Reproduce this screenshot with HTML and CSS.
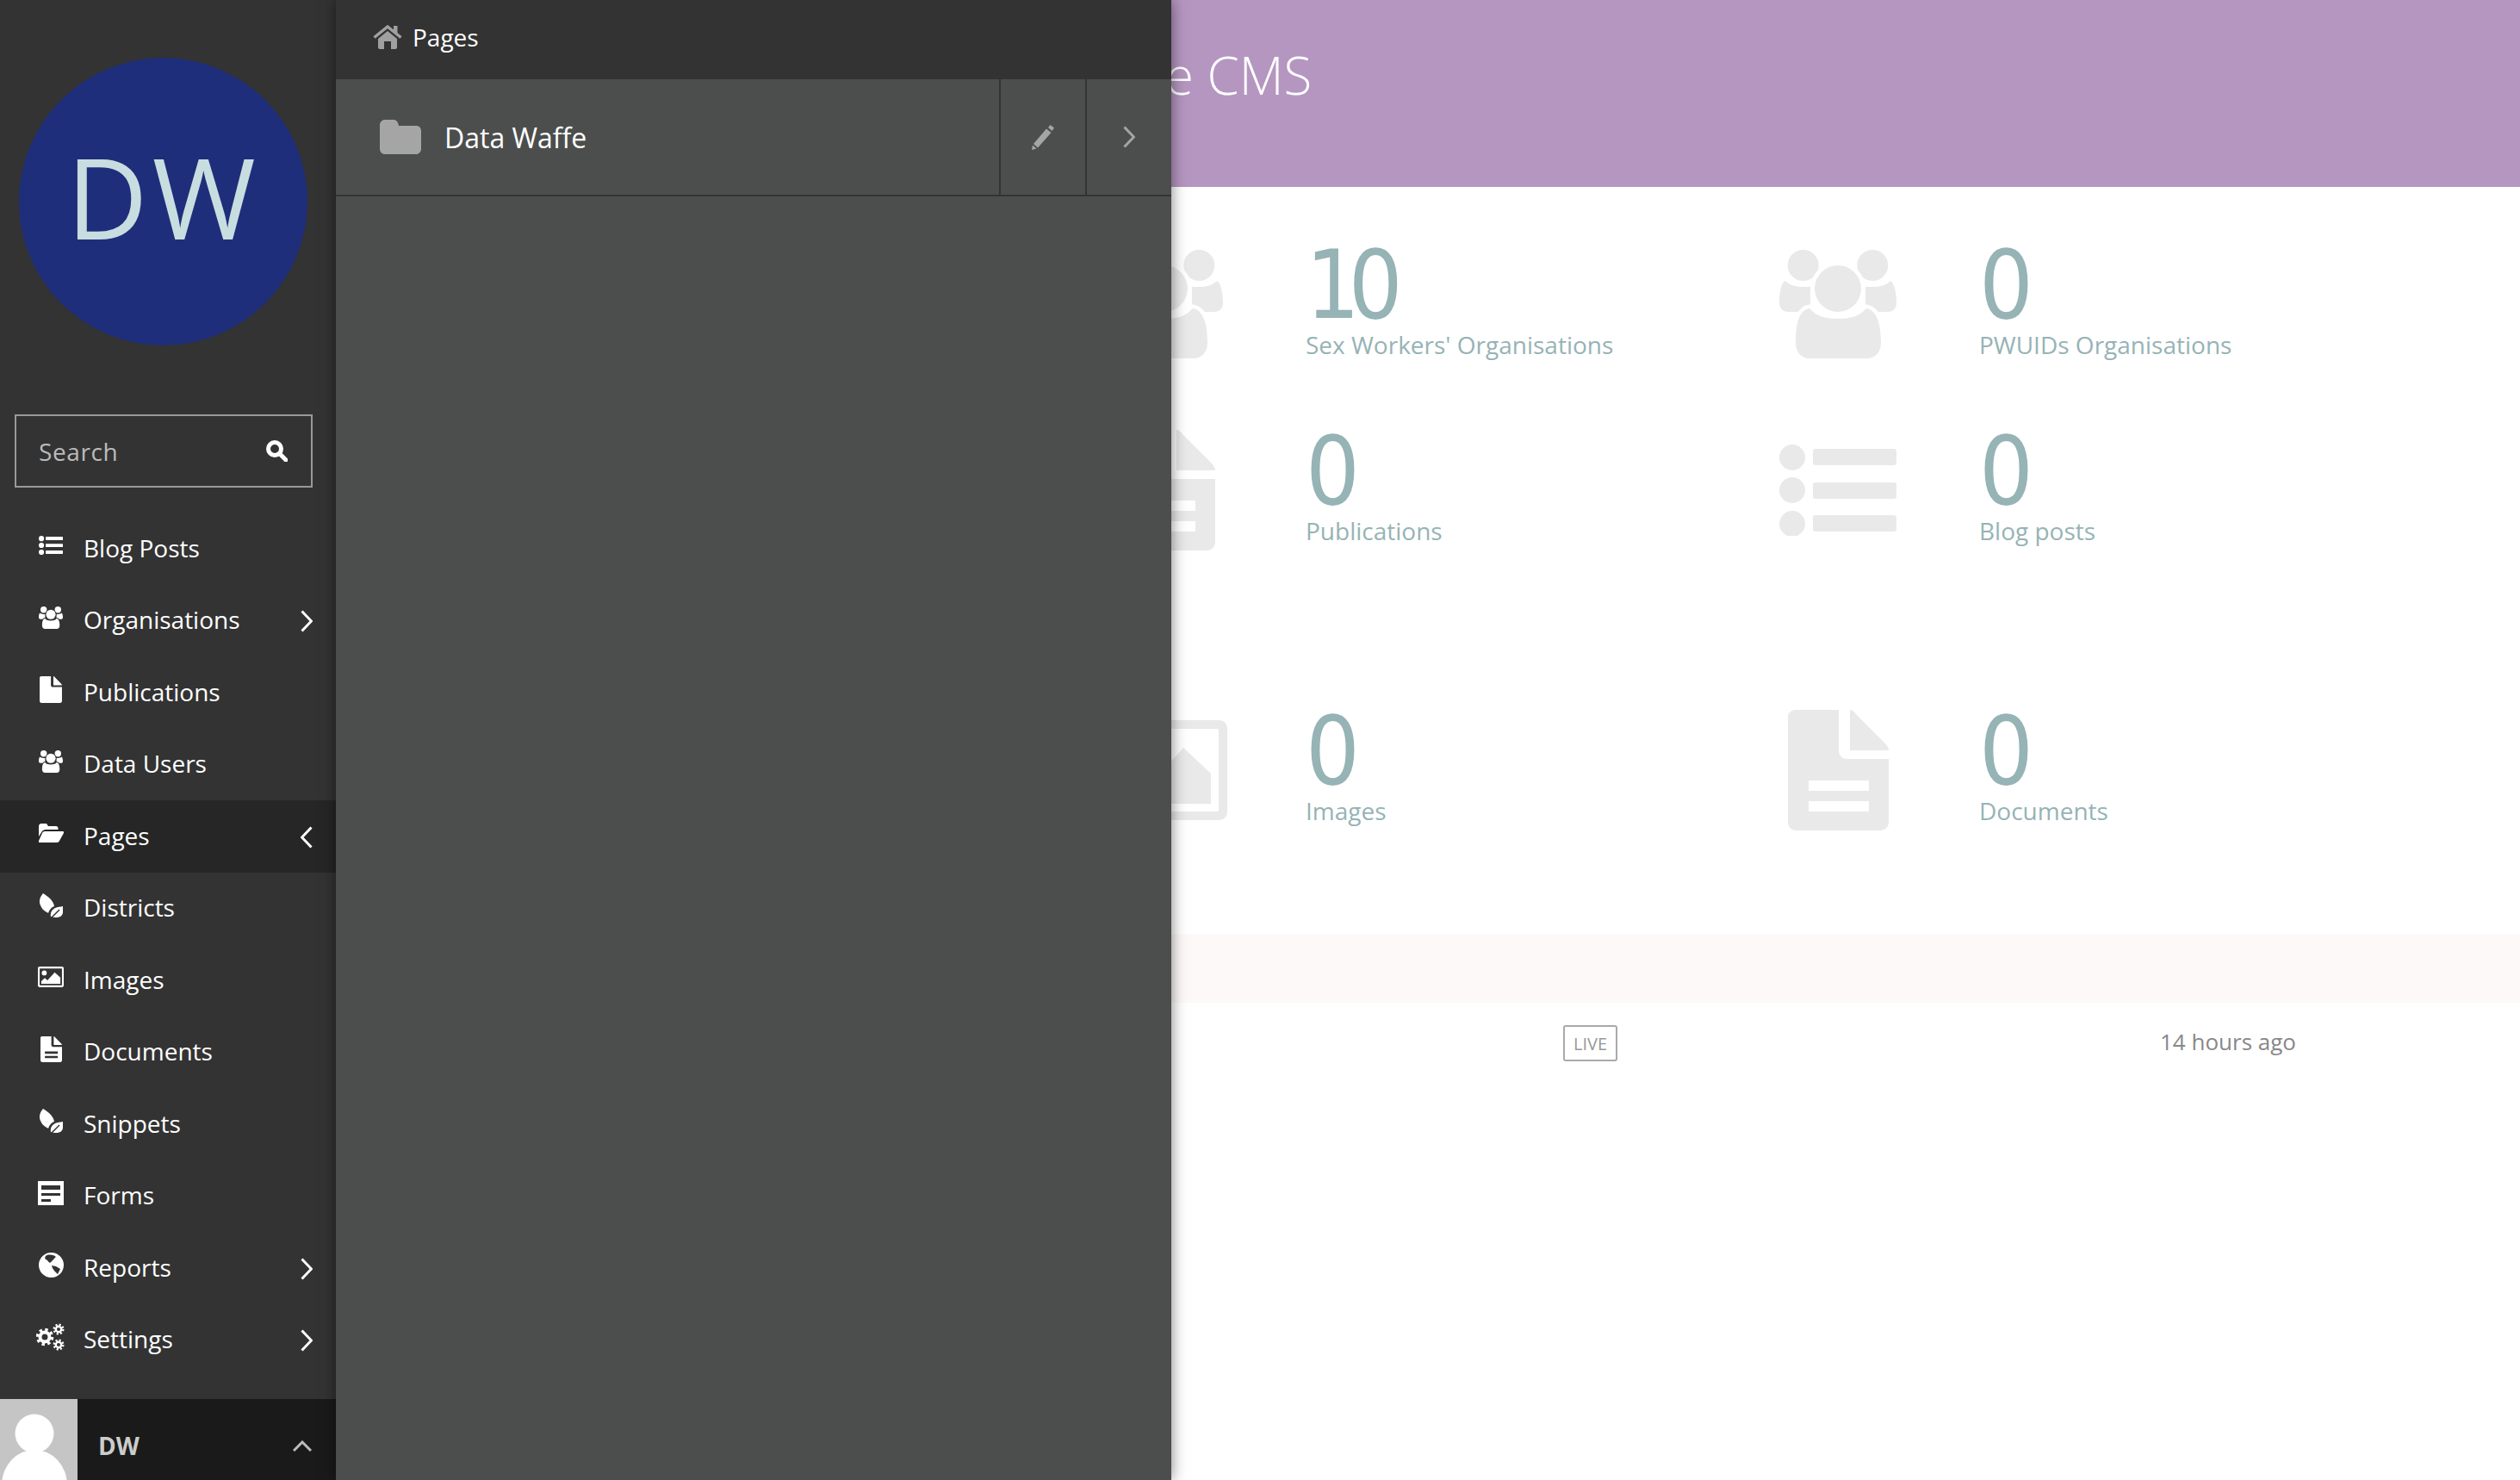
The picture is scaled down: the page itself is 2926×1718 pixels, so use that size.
FILE: index.html
```html
<!DOCTYPE html>
<html lang="en">
<head>
<meta charset="utf-8">
<title>Data Waffe CMS</title>
<link rel="stylesheet" href="styles.css">
</head>
<body>
<svg class="defs" width="0" height="0" aria-hidden="true">
  <symbol id="i-group" viewBox="0 0 136 126">
    <path d="M7 36c5 5 12 7 20 7 8 0 9 0 9-1v30H10C4 72 0 68 0 61 0 50 2 38 7 36z"/>
    <path d="M129 36c-5 5-12 7-20 7-8 0-9 0-9-1v30h26c6 0 10-4 10-10 0-11-2-23-7-26z"/>
    <ellipse cx="27.700" cy="18" rx="18" ry="18"/>
    <ellipse cx="108.300" cy="18" rx="18" ry="18"/>
    <path class="ring" d="M19 108C19 88 22 70 35 68c8 9 18 12 33 12s25-3 33-12c13 2 17 20 17 40 0 11-7 18-16 18H35c-9 0-16-7-16-18z"/>
    <ellipse class="ring" cx="68" cy="45" rx="27" ry="27"/>
  </symbol>
  <symbol id="i-list" viewBox="0 0 136 106">
    <circle cx="15" cy="15" r="15"/><circle cx="15" cy="53" r="15"/><circle cx="15" cy="92" r="15"/>
    <rect x="39" y="5" width="97" height="19" rx="3"/><rect x="39" y="44" width="97" height="19" rx="3"/><rect x="39" y="82" width="97" height="19" rx="3"/>
  </symbol>
  <symbol id="i-doc" viewBox="0 0 117 140">
    <path fill-rule="evenodd" d="M8 0H59V47c0 6 4 10 10 10H117V130c0 6-4 10-10 10H10C4 140 0 136 0 130V8C0 4 4 0 8 0zM24 82v12h70V82zM24 106v12h70v-12z"/>
    <path d="M72 0c3 0 5 2 7 5l32 32c4 4 6 7 6 10H72z"/>
  </symbol>
  <symbol id="i-file" viewBox="0 0 117 140">
    <path d="M8 0H59V47c0 6 4 10 10 10H117V130c0 6-4 10-10 10H10C4 140 0 136 0 130V8C0 4 4 0 8 0z"/>
    <path d="M72 0c3 0 5 2 7 5l32 32c4 4 6 7 6 10H72z"/>
  </symbol>
  <symbol id="i-image" viewBox="0 0 146 116">
    <path fill-rule="evenodd" d="M10 0H136c6 0 10 4 10 10V106c0 6-4 10-10 10H10C4 116 0 112 0 106V10C0 4 4 0 10 0zM12 10c-1 0-2 1-2 2V104c0 1 1 2 2 2H134c1 0 2-1 2-2V12c0-1-1-2-2-2z"/>
    <circle cx="36" cy="36" r="14"/>
    <path d="M19 97V82l20-18 15 14 41-46 32 30v35z"/>
  </symbol>
  <symbol id="i-open" viewBox="0 0 29 22">
    <path d="M0 3c0-1.500 1-3 3-3h6l2 3h9c1.500 0 2.500 1 2.500 2.500V7H8c-2 0-3.500 1-4.500 2.500L0 15z"/>
    <path d="M7 9h21c1 0 1.500 1 1 2l-5 9c-.5 1-1.500 2-3 2H1c-1 0-1.500-1-1-2l4-9c.5-1 1.500-2 3-2z"/>
  </symbol>
  <symbol id="i-leaf" viewBox="0 0 28 28">
    <path d="M5 0c5 3 12 8 13 15-3 1-6 4-7 8-1-1-6-3-8-7C0 11 0 6 5 0z"/>
    <path d="M28 15c1 6 0 10-3 12-3 1.500-7 1.500-11 0-1-4 1-8 5-10 3-1.500 6-1 9-2z"/>
    <path class="vein" d="M15 28l9-9"/>
  </symbol>
  <symbol id="i-forms" viewBox="0 0 30 28">
    <path fill-rule="evenodd" d="M0 0H30V28H0zM4 5v5H26V5zM4 14v3H26v-3zM4 21v3H15v-3z"/>
  </symbol>
  <symbol id="i-globe" viewBox="0 0 29 29">
    <path fill-rule="evenodd" d="M14.500 0a14.500 14.500 0 1 1 0 29 14.500 14.500 0 0 1 0-29zM8 4c3-2 8-2 12 1-2 1-2 3-4 4-1 2-3 2-3 3-2-1-3-4-5-4-1-1-1-3 0-4zM15 15l5 1 5 3-3 6c-2-2-6-5-7-10z"/>
  </symbol>
  <symbol id="i-gears" viewBox="0 0 34 32">
    <g class="gear-line">
      <circle cx="10" cy="16" r="5.500" stroke-width="4"/>
      <circle cx="10" cy="16" r="8.500" stroke-width="3.500" stroke-dasharray="3.340 3.340"/>
      <circle cx="26" cy="7" r="3.200" stroke-width="2.400"/>
      <circle cx="26" cy="7" r="5.200" stroke-width="2.600" stroke-dasharray="2.040 2.040"/>
      <circle cx="26" cy="25" r="3.200" stroke-width="2.400"/>
      <circle cx="26" cy="25" r="5.200" stroke-width="2.600" stroke-dasharray="2.040 2.040"/>
    </g>
  </symbol>
  <symbol id="i-search" viewBox="0 0 25 25">
    <circle class="sw" cx="10" cy="10" r="7.500"/><path class="sw" d="M15.500 15.500L23 23"/>
  </symbol>
  <symbol id="i-right" viewBox="0 0 14 26"><path class="ch" d="M1.500 1.500L12.500 13 1.500 24.500"/></symbol>
  <symbol id="i-left" viewBox="0 0 14 26"><path class="ch" d="M12.500 1.500L1.500 13 12.500 24.500"/></symbol>
  <symbol id="i-up" viewBox="0 0 22 13"><path class="ch" d="M1 12L11 2 21 12"/></symbol>
</svg>

<div class="app">
  <aside class="sidebar">
    <div class="logo"><span class="logo-text">DW</span></div>
    <div class="search">
      <span class="search-label">Search</span>
      <svg class="search-icon" width="25" height="25"><use href="#i-search"/></svg>
    </div>
    <nav class="nav">
      <a class="nav-row"><span class="nav-icon"><svg width="28" height="22"><use href="#i-list"/></svg></span><span class="nav-label">Blog Posts</span></a>
      <a class="nav-row"><span class="nav-icon"><svg width="28" height="26"><use href="#i-group"/></svg></span><span class="nav-label">Organisations</span><svg class="chev" width="14" height="26"><use href="#i-right"/></svg></a>
      <a class="nav-row"><span class="nav-icon"><svg width="26" height="31"><use href="#i-file"/></svg></span><span class="nav-label">Publications</span></a>
      <a class="nav-row"><span class="nav-icon"><svg width="28" height="26"><use href="#i-group"/></svg></span><span class="nav-label">Data Users</span></a>
      <a class="nav-row nav-row-active"><span class="nav-icon"><svg width="29" height="22"><use href="#i-open"/></svg></span><span class="nav-label">Pages</span><svg class="chev" width="14" height="26"><use href="#i-left"/></svg></a>
      <a class="nav-row"><span class="nav-icon"><svg width="28" height="28"><use href="#i-leaf"/></svg></span><span class="nav-label">Districts</span></a>
      <a class="nav-row"><span class="nav-icon"><svg width="30" height="24"><use href="#i-image"/></svg></span><span class="nav-label">Images</span></a>
      <a class="nav-row"><span class="nav-icon"><svg width="25" height="30"><use href="#i-doc"/></svg></span><span class="nav-label">Documents</span></a>
      <a class="nav-row"><span class="nav-icon"><svg width="28" height="28"><use href="#i-leaf"/></svg></span><span class="nav-label">Snippets</span></a>
      <a class="nav-row"><span class="nav-icon"><svg width="30" height="28"><use href="#i-forms"/></svg></span><span class="nav-label">Forms</span></a>
      <a class="nav-row"><span class="nav-icon"><svg width="29" height="29"><use href="#i-globe"/></svg></span><span class="nav-label">Reports</span><svg class="chev" width="14" height="26"><use href="#i-right"/></svg></a>
      <a class="nav-row"><span class="nav-icon"><svg width="34" height="32"><use href="#i-gears"/></svg></span><span class="nav-label">Settings</span><svg class="chev" width="14" height="26"><use href="#i-right"/></svg></a>
    </nav>
    <div class="account">
      <svg class="avatar" width="90" height="94" viewBox="0 0 90 94">
        <rect width="90" height="94" class="avatar-bg"/>
        <circle cx="40" cy="40" r="22.500" class="avatar-fg"/>
        <ellipse cx="40" cy="100" rx="38" ry="41" class="avatar-fg"/>
      </svg>
      <span class="account-name">DW</span>
      <svg class="account-chev" width="22" height="13"><use href="#i-up"/></svg>
    </div>
  </aside>

  <main class="main">
    <header class="banner"><h1 class="banner-title">Data Waffe CMS</h1></header>
    <section class="stats stats-people">
      <div class="stat"><span class="stat-icon"><svg width="136" height="126"><use href="#i-group"/></svg></span><div class="stat-text"><div class="stat-num">10</div><div class="stat-label">Sex Workers' Organisations</div></div></div>
      <div class="stat"><span class="stat-icon"><svg width="136" height="126"><use href="#i-group"/></svg></span><div class="stat-text"><div class="stat-num">0</div><div class="stat-label">PWUIDs Organisations</div></div></div>
      <div class="stat"><span class="stat-icon"><svg width="117" height="140"><use href="#i-doc"/></svg></span><div class="stat-text"><div class="stat-num">0</div><div class="stat-label">Publications</div></div></div>
      <div class="stat"><span class="stat-icon"><svg width="136" height="106"><use href="#i-list"/></svg></span><div class="stat-text"><div class="stat-num">0</div><div class="stat-label">Blog posts</div></div></div>
    </section>
    <section class="stats stats-media">
      <div class="stat"><span class="stat-icon"><svg width="146" height="116"><use href="#i-image"/></svg></span><div class="stat-text"><div class="stat-num">0</div><div class="stat-label">Images</div></div></div>
      <div class="stat"><span class="stat-icon"><svg width="117" height="140"><use href="#i-doc"/></svg></span><div class="stat-text"><div class="stat-num">0</div><div class="stat-label">Documents</div></div></div>
    </section>
    <div class="band"></div>
    <div class="page-row">
      <span></span>
      <span class="tag">LIVE</span>
      <span class="updated">14 hours ago</span>
    </div>
  </main>

  <section class="explorer">
    <div class="explorer-head">
      <svg class="home" width="34" height="28" viewBox="0 0 34 28">
        <rect x="24" y="1" width="4.500" height="9"/>
        <path class="roof" d="M1.500 14.500L17 2l15.500 12.500"/>
        <path d="M6 16L17 7l11 9v10c0 1-1 2-2 2h-5v-9h-8v9H8c-1 0-2-1-2-2z"/>
      </svg>
      <span class="explorer-title">Pages</span>
    </div>
    <div class="explorer-row">
      <div class="explorer-name">
        <svg class="folder" width="48" height="40" viewBox="0 0 48 40"><path d="M6 0h10c3 0 5 2 6 7h20c3.300 0 6 2 6 6v21c0 3.300-2.700 6-6 6H6c-3.300 0-6-2.700-6-6V6C0 2.700 2.700 0 6 0z"/></svg>
        <span>Data Waffe</span>
      </div>
      <div class="explorer-action">
        <svg class="muted-icon" width="26" height="29" viewBox="0 0 26 29"><path d="M2 22L17 4.500l5.500 4.500L7 26.500zM0 29l1-5.500 4.500 4zM19 3l2.500-3L26 3.500 23.500 7z"/></svg>
      </div>
      <div class="explorer-action">
        <svg class="explorer-chev" width="14" height="26"><use href="#i-right"/></svg>
      </div>
    </div>
  </section>
</div>
</body>
</html>
```

FILE: styles.css
```css
* { box-sizing: border-box; }
html, body { margin: 0; height: 100%; }
body {
  width: 2926px;
  height: 1718px;
  overflow: hidden;
  background: #fff;
  font-family: "Open Sans", "Liberation Sans", sans-serif;
}
.defs { position: absolute; }
.ring { stroke: var(--ring, #fff); stroke-width: 9; paint-order: stroke; }
.gear-line { fill: none; stroke: currentColor; }
.vein { fill: none; stroke: var(--ring, #333); stroke-width: 1.500; }
.sw { fill: none; stroke: currentColor; stroke-width: 5; stroke-linecap: round; }
.ch { fill: none; stroke: currentColor; stroke-width: 3; }

.app { position: relative; display: flex; width: 100%; height: 1718px; }

/* Sidebar */
.sidebar {
  flex: 0 0 390px;
  display: flex;
  flex-direction: column;
  height: 100%;
  background: #333;
  color: #fff;
  fill: #fff;
  --ring: #333;
}
.logo {
  display: flex;
  align-items: center;
  justify-content: center;
  width: 335px;
  height: 334px;
  margin: 67px 0 0 22px;
  border-radius: 50%;
  background: #1f2e7a;
}
.logo-text {
  font-size: 130px;
  font-weight: 400;
  letter-spacing: 5px;
  line-height: 1;
  color: #c8dde0;
  margin-bottom: 12px;
}
.search {
  display: flex;
  align-items: center;
  justify-content: space-between;
  width: 346px;
  height: 85px;
  margin: 80px 0 0 17px;
  padding: 0 27px 0 26px;
  border: 2px solid #999;
}
.search-label { font-size: 28px; color: #bbb; letter-spacing: .6px; }
.search-icon { color: #fff; }

.nav { margin-top: 29px; }
.nav-row {
  display: flex;
  align-items: center;
  height: 83.500px;
  padding-right: 27px;
}
.nav-row-active { background: #262626; --ring: #262626; }
.nav-icon {
  display: flex;
  align-items: center;
  justify-content: center;
  flex: 0 0 44px;
  margin-left: 37px;
  margin-bottom: 7px;
}
.nav-label { margin: 0 0 2px 16px; font-size: 28px; line-height: 40px; }
.chev { margin: 2px 0 0 auto; color: #fff; }

.account {
  display: flex;
  align-items: center;
  height: 94px;
  margin-top: auto;
  padding-right: 28px;
  background: #1a1a1a;
}
.avatar { flex: none; }
.avatar-bg { fill: #c5c5c5; }
.avatar-fg { fill: #fff; }
.account-name { margin: 14px 0 0 24px; font-size: 28px; font-weight: 700; color: #ccc; }
.account-chev { margin: 14px 0 0 auto; color: #bbb; }

/* Main */
.main { flex: 1; min-width: 0; }
.banner {
  display: flex;
  align-items: center;
  height: 217px;
  padding: 0 0 43px 700px;
  background: #b596c0;
}
.banner-title { margin: 0; font-size: 60px; font-weight: 300; color: #fff; line-height: 80px; }
.stats {
  display: grid;
  grid-template-columns: 782px 782px;
  grid-auto-rows: 128px;
  row-gap: 88px;
  padding-left: 894px;
}
.stats-people { margin-top: 72px; }
.stats-media { margin-top: 197px; }
.stat { display: flex; align-items: center; }
.stat-icon {
  display: flex;
  align-items: center;
  justify-content: center;
  flex: 0 0 136px;
  min-width: 0;
  height: 128px;
  color: #e9e9e9;
  fill: #e9e9e9;
  --ring: #fff;
}
.stat-icon svg { flex: none; }
.stat-text { margin-left: 96px; }
.stat-num {
  font-family: "DejaVu Sans Condensed", "DejaVu Sans", "Open Sans", sans-serif;
  font-stretch: condensed;
  font-size: 110px;
  font-weight: 400;
  letter-spacing: -.12em;
  line-height: 90px;
  color: #96b3b5;
}
.stat-label { margin-top: 4px; font-size: 28px; line-height: 40px; color: #96b3b5; }

.band { height: 79px; margin-top: 127px; background: #fcf9f8; }
.page-row {
  display: grid;
  grid-template-columns: 1425px 693px auto;
  align-items: center;
  padding-top: 26px;
}
.tag {
  justify-self: start;
  display: flex;
  align-items: center;
  justify-content: center;
  width: 63px;
  height: 42px;
  border: 2px solid #aaa;
  border-radius: 3px;
  font-size: 20px;
  color: #999;
}
.updated { font-size: 26px; color: #888; margin-top: -4px; }

/* Explorer overlay */
.explorer {
  position: absolute;
  top: 0;
  left: 390px;
  width: 970px;
  height: 100%;
  background: #4c4e4d;
  box-shadow: 0 0 16px rgba(0, 0, 0, .5);
  color: #fff;
}
.explorer-head {
  display: flex;
  align-items: center;
  gap: 12px;
  height: 92px;
  padding: 0 0 6px 43px;
  background: #333;
}
.home { fill: #a0a0a0; }
.roof { fill: none; stroke: #a0a0a0; stroke-width: 3.500; }
.explorer-title { font-size: 28px; }
.explorer-row {
  display: flex;
  height: 136px;
  border-bottom: 2px solid #333;
}
.explorer-name {
  display: flex;
  align-items: center;
  gap: 27px;
  flex: 1;
  padding-left: 51px;
  font-size: 32px;
}
.folder { fill: #a5a5a5; }
.explorer-action {
  display: flex;
  align-items: center;
  justify-content: center;
  flex: 0 0 100px;
  border-left: 2px solid #333;
}
.muted-icon { fill: #a5a5a5; }
.explorer-chev { color: #a5a5a5; }
```
